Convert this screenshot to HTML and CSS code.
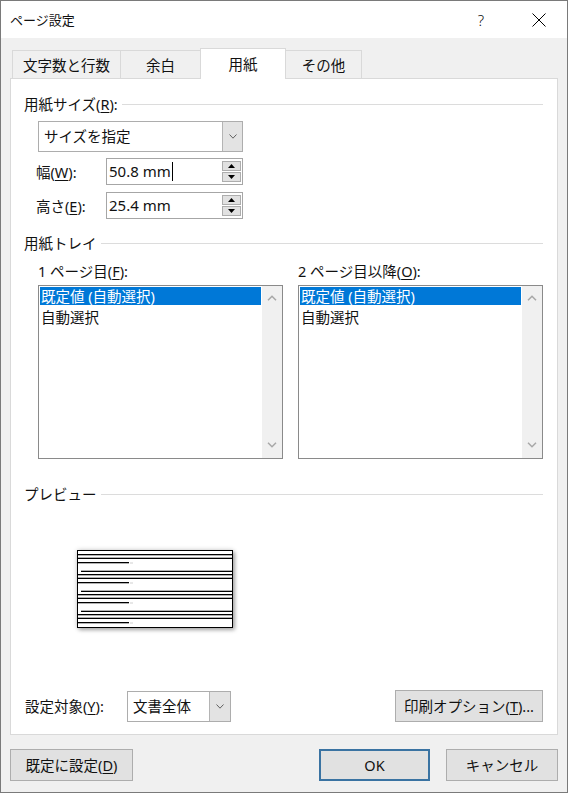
FILE: index.html
```html
<!DOCTYPE html>
<html lang="ja">
<head>
<meta charset="utf-8">
<title>ページ設定</title>
<link rel="stylesheet" href="styles.css">
</head>
<body>
<div class="window">
  <div class="titlebar">
    <span class="title">ページ設定</span>
    <span class="help">?</span>
    <span class="close"><svg width="14" height="14" viewBox="0 0 14 14"><path d="M0.5 0.5L13.5 13.5M13.5 0.5L0.5 13.5" stroke="#000" stroke-width="1" fill="none"/></svg></span>
  </div>
  <div class="client">
    <div class="tabs">
      <div class="tab tab-1">文字数と行数</div>
      <div class="tab tab-2">余白</div>
      <div class="tab tab-3 active">用紙</div>
      <div class="tab tab-4">その他</div>
    </div>
    <div class="panel">
      <div class="group-title">用紙サイズ(<u>R</u>):</div>
      <div class="combo combo-size">
        <span class="combo-text">サイズを指定</span>
        <span class="combo-btn"><svg width="8" height="5" viewBox="0 0 8 5"><path d="M0.5 0.5L4 4.2L7.5 0.5" stroke="#606060" stroke-width="1" fill="none"/></svg></span>
      </div>
      <div class="field">
        <span class="field-label">幅(<u>W</u>):</span>
        <div class="spin">
          <span class="spin-text">50.8 mm<span class="caret"></span></span>
          <span class="spin-btns">
            <span class="spin-btn"><svg width="7" height="4" viewBox="0 0 7 4"><path d="M0 4L3.5 0L7 4Z" fill="#000"/></svg></span>
            <span class="spin-btn"><svg width="7" height="4" viewBox="0 0 7 4"><path d="M0 0L7 0L3.5 4Z" fill="#000"/></svg></span>
          </span>
        </div>
      </div>
      <div class="field">
        <span class="field-label">高さ(<u>E</u>):</span>
        <div class="spin">
          <span class="spin-text">25.4 mm</span>
          <span class="spin-btns">
            <span class="spin-btn"><svg width="7" height="4" viewBox="0 0 7 4"><path d="M0 4L3.5 0L7 4Z" fill="#000"/></svg></span>
            <span class="spin-btn"><svg width="7" height="4" viewBox="0 0 7 4"><path d="M0 0L7 0L3.5 4Z" fill="#000"/></svg></span>
          </span>
        </div>
      </div>

      <div class="group-title group-tray">用紙トレイ</div>
      <div class="trays">
        <div class="tray">
          <div class="tray-label">1 ページ目(<u>F</u>):</div>
          <div class="listbox">
            <div class="list-items">
              <div class="list-item selected">既定値 (自動選択)</div>
              <div class="list-item">自動選択</div>
            </div>
            <div class="scrollbar">
              <svg width="10" height="6" viewBox="0 0 10 6"><path d="M1 5.3L5 1.3L9 5.3" stroke="#a8a8a8" stroke-width="1.5" fill="none"/></svg>
              <svg width="10" height="6" viewBox="0 0 10 6"><path d="M1 0.7L5 4.7L9 0.7" stroke="#a8a8a8" stroke-width="1.5" fill="none"/></svg>
            </div>
          </div>
        </div>
        <div class="tray">
          <div class="tray-label">2 ページ目以降(<u>O</u>):</div>
          <div class="listbox">
            <div class="list-items">
              <div class="list-item selected">既定値 (自動選択)</div>
              <div class="list-item">自動選択</div>
            </div>
            <div class="scrollbar">
              <svg width="10" height="6" viewBox="0 0 10 6"><path d="M1 5.3L5 1.3L9 5.3" stroke="#a8a8a8" stroke-width="1.5" fill="none"/></svg>
              <svg width="10" height="6" viewBox="0 0 10 6"><path d="M1 0.7L5 4.7L9 0.7" stroke="#a8a8a8" stroke-width="1.5" fill="none"/></svg>
            </div>
          </div>
        </div>
      </div>

      <div class="group-title group-preview">プレビュー</div>
      <div class="preview">
        <svg width="154" height="76" viewBox="0 0 154 76">
          <g fill="#000">
            <rect x="0" y="3" width="154" height="1.3"/>
            <rect x="0" y="6.7" width="154" height="1.3"/>
            <rect x="0" y="11" width="51" height="1.3"/>
            <rect x="3" y="19.7" width="151" height="1.3"/>
            <rect x="0" y="23" width="154" height="1.3"/>
            <rect x="0" y="26.7" width="154" height="1.3"/>
            <rect x="0" y="31" width="51" height="1.3"/>
            <rect x="3" y="39.7" width="151" height="1.3"/>
            <rect x="0" y="43" width="154" height="1.3"/>
            <rect x="0" y="46.7" width="154" height="1.3"/>
            <rect x="0" y="51" width="51" height="1.3"/>
            <rect x="3" y="59.7" width="151" height="1.3"/>
            <rect x="0" y="63" width="154" height="1.3"/>
            <rect x="0" y="66.7" width="154" height="1.3"/>
            <rect x="0" y="71" width="51" height="1.3"/>
          </g>
          <g fill="#d0d0d0">
            <rect x="52" y="11.5" width="3" height="1"/>
            <rect x="52" y="31.5" width="3" height="1"/>
            <rect x="52" y="51.5" width="3" height="1"/>
            <rect x="52" y="71.5" width="3" height="1"/>
          </g>
        </svg>
      </div>

      <div class="apply-row">
        <span class="apply-label">設定対象(<u>Y</u>):</span>
        <div class="combo combo-apply">
          <span class="combo-text">文書全体</span>
          <span class="combo-btn"><svg width="8" height="5" viewBox="0 0 8 5"><path d="M0.5 0.5L4 4.2L7.5 0.5" stroke="#606060" stroke-width="1" fill="none"/></svg></span>
        </div>
        <div class="btn btn-print">印刷オプション(<u>T</u>)...</div>
      </div>
    </div>
    <div class="footer">
      <div class="btn btn-default">既定に設定(<u>D</u>)</div>
      <div class="btn btn-ok">OK</div>
      <div class="btn btn-cancel">キャンセル</div>
    </div>
  </div>
</div>
</body>
</html>
```

FILE: styles.css
```css
* {
  box-sizing: border-box;
}

html,
body {
  margin: 0;
  padding: 0;
}

body {
  width: 568px;
  height: 793px;
  overflow: hidden;
  background: #f0f0f0;
  font-family: "Noto Sans", "Noto Sans CJK JP", sans-serif;
  font-size: 14.5px;
  color: #111;
}

u {
  text-underline-offset: 2px;
  text-decoration-thickness: 1px;
}

.window {
  height: 793px;
  border: 1px solid #7a7a7a;
  background: #f0f0f0;
  display: flex;
  flex-direction: column;
}

/* title bar */
.titlebar {
  height: 37px;
  background: #fff;
  display: flex;
  align-items: center;
  padding: 0 5px 0 9px;
}

.title {
  flex: 1;
  font-size: 13px;
  line-height: 20px;
}

.help {
  width: 40px;
  text-align: center;
  font-size: 15px;
  font-weight: 300;
  line-height: 20px;
}

.close {
  width: 46px;
  margin-left: 15px;
  display: flex;
  justify-content: center;
  align-items: center;
}

/* client area */
.client {
  flex: 1;
  display: flex;
  flex-direction: column;
  padding: 10px 9px 0 9px;
}

.tabs {
  display: flex;
  align-items: flex-end;
  height: 30px;
  padding-left: 2px;
}

.tab {
  height: 28px;
  border: 1px solid #d9d9d9;
  border-bottom: none;
  background: #f0f0f0;
  display: flex;
  align-items: center;
  justify-content: center;
  line-height: 20px;
  white-space: nowrap;
}

.tab + .tab {
  margin-left: -1px;
}

.tab-1 { width: 109px; }
.tab-2 { width: 81px; }
.tab-3 { width: 86px; }
.tab-4 { width: 77px; }

.tab.active {
  height: 31px;
  margin-bottom: -1px;
  background: #fff;
  position: relative;
  z-index: 1;
}

.panel {
  width: 548px;
  height: 657px;
  background: #fff;
  border: 1px solid #d9d9d9;
  padding: 15px 14px 12px 13px;
  display: flex;
  flex-direction: column;
}

.group-title {
  display: flex;
  align-items: center;
  height: 20px;
  line-height: 20px;
  white-space: nowrap;
}

.group-title::after {
  content: "";
  flex: 1;
  height: 1px;
  background: #dcdcdc;
  margin-left: 4px;
}

.group-tray {
  margin-top: 14px;
}

.group-preview {
  margin-top: 25px;
}

/* combo boxes */
.combo {
  display: flex;
  border: 1px solid #adadad;
  background: #fff;
}

.combo-size {
  margin: 7px 0 0 14px;
  width: 205px;
  height: 31px;
}

.combo-apply {
  width: 104px;
  height: 31px;
}

.combo-text {
  flex: 1;
  padding-left: 5px;
  line-height: 29px;
  white-space: nowrap;
}

.combo-btn {
  width: 20px;
  background: #e3e3e3;
  border-left: 1px solid #b4b4b4;
  display: flex;
  align-items: center;
  justify-content: center;
}

.combo-apply .combo-btn {
  width: 21px;
}

/* spin fields */
.field {
  display: flex;
  align-items: center;
  margin: 6px 0 0 12px;
}

.field + .field {
  margin-top: 7px;
}

.field-label {
  width: 70px;
  line-height: 20px;
  white-space: nowrap;
}

.spin {
  width: 137px;
  height: 27px;
  border: 1px solid #a6a6a6;
  background: #fff;
  display: flex;
}

.spin-text {
  flex: 1;
  padding-left: 2px;
  line-height: 25px;
  font-size: 15px;
  display: flex;
  align-items: center;
}

.caret {
  display: inline-block;
  width: 1px;
  height: 19px;
  background: #000;
  margin-left: 1px;
}

.spin-btns {
  width: 19px;
  margin: 2px 1px 2px 0;
  display: flex;
  flex-direction: column;
  gap: 1px;
}

.spin-btn {
  flex: 1;
  background: #e1e1e1;
  border: 1px solid #adadad;
  display: flex;
  align-items: center;
  justify-content: center;
}

/* trays */
.trays {
  display: flex;
  gap: 15px;
  margin: 8px 0 0 14px;
}

.tray {
  width: 245px;
}

.tray-label {
  height: 20px;
  line-height: 20px;
  white-space: nowrap;
}

.listbox {
  margin-top: 4px;
  height: 174px;
  border: 1px solid #8a8a8a;
  background: #fff;
  display: flex;
}

.list-items {
  flex: 1;
  padding: 1px;
}

.list-item {
  height: 20px;
  line-height: 20px;
  padding-left: 1px;
  white-space: nowrap;
}

.list-item.selected {
  height: 18px;
  line-height: 18px;
  margin-bottom: 2px;
  background: #0078d7;
  color: #fff;
}

.scrollbar {
  width: 20px;
  background: #f0f0f0;
  display: flex;
  flex-direction: column;
  align-items: center;
  justify-content: space-between;
  padding: 9px 0 10px;
}

/* preview */
.preview {
  margin: 46px 0 0 53px;
  width: 156px;
  height: 78px;
  border: 1px solid #000;
  background: #fff;
  box-shadow: 0 0 5px rgba(0, 0, 0, 0.18), 2px 2px 4px rgba(0, 0, 0, 0.3);
}

.preview svg {
  display: block;
}

/* bottom row of panel */
.apply-row {
  margin-top: auto;
  display: flex;
  align-items: center;
}

.apply-label {
  width: 103px;
  padding-left: 1px;
  line-height: 20px;
  white-space: nowrap;
}

.btn {
  height: 32px;
  border: 1px solid #adadad;
  background: #e1e1e1;
  display: flex;
  align-items: center;
  justify-content: center;
  line-height: 20px;
  white-space: nowrap;
}

.btn-print {
  margin-left: auto;
  width: 148px;
}

/* footer */
.footer {
  display: flex;
  margin-top: 14px;
}

.btn-default {
  width: 123px;
}

.btn-ok {
  margin-left: auto;
  width: 111px;
  border: 2px solid #3a73a2;
}

.btn-cancel {
  margin-left: 16px;
  width: 112px;
}
```
